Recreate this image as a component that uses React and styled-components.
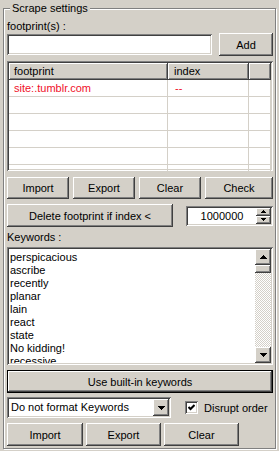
import React from "react";
import styled, { createGlobalStyle } from "styled-components";

const GlobalStyle = createGlobalStyle`
  html, body {
    margin: 0;
    background: #d4d0c8;
  }
  body {
    font-family: "Liberation Sans", Arial, sans-serif;
    font-size: 11px;
    color: #000;
  }
  * {
    box-sizing: border-box;
  }
`;

const raised = `
  box-shadow: inset -1px -1px #404040, inset 1px 1px #ffffff,
    inset -2px -2px #808080, inset 2px 2px #d4d0c8;
`;

const sunken = `
  box-shadow: inset 1px 1px #808080, inset -1px -1px #ffffff,
    inset 2px 2px #404040, inset -2px -2px #d4d0c8;
`;

const Window = styled.div`
  width: 279px;
  height: 451px;
  padding: 2px 3px 0 3px;
  overflow: hidden;
`;

const Group = styled.fieldset`
  margin: 0;
  padding: 5px 2px 2px 3px;
  min-width: 0;
  border: 1px solid #808080;
  box-shadow: inset 1px 1px #ffffff, 1px 1px #ffffff;
`;

const Legend = styled.legend`
  margin-left: 3px;
  padding: 0 2px;
  line-height: 13px;
  background: #d4d0c8;
`;

const Column = styled.div`
  display: flex;
  flex-direction: column;
`;

const Label = styled.div`
  height: 13px;
  line-height: 13px;
  margin-top: ${(p) => p.$mt || 0}px;
`;

const Row = styled.div`
  display: flex;
  align-items: center;
  gap: ${(p) => p.$gap || 0}px;
  margin-top: ${(p) => p.$mt || 0}px;
`;

const Button = styled.button`
  font: inherit;
  color: #000;
  background: #d4d0c8;
  border: 0;
  padding: 0;
  width: ${(p) => (p.$w ? `${p.$w}px` : "auto")};
  flex: ${(p) => (p.$w ? "none" : "1")};
  height: ${(p) => p.$h || 23}px;
  ${raised}
`;

const DefaultButton = styled(Button)`
  border: 1px solid #000;
  box-shadow: inset -1px -1px #404040, inset 1px 1px #ffffff,
    inset -2px -2px #808080;
`;

const TextInput = styled.div`
  width: 205px;
  height: 21px;
  background: #fff;
  ${sunken}
`;

const ListView = styled.div`
  margin-top: 5px;
  height: 110px;
  padding: 2px;
  background: #fff;
  overflow: hidden;
  ${sunken}
`;

const GridRow = styled.div`
  display: grid;
  grid-template-columns: 159px 81px 1fr;
  height: 17px;
`;

const HeadCell = styled.div`
  background: #d4d0c8;
  line-height: 16px;
  padding-left: ${(p) => p.$pl || 5}px;
  box-shadow: inset -1px -1px #404040, inset 1px 1px #ffffff,
    inset -2px -2px #808080;
`;

const Cell = styled.div`
  border-right: 1px solid #d4d0c8;
  border-bottom: 1px solid #d4d0c8;
  line-height: 16px;
  padding-left: ${(p) => p.$pl || 5}px;
  color: #f0102a;
`;

const SpinBox = styled.div`
  margin-left: auto;
  width: 87px;
  height: 20px;
  padding: 2px;
  display: flex;
  background: #fff;
  ${sunken}
`;

const SpinValue = styled.div`
  flex: 1;
  text-align: center;
  line-height: 16px;
`;

const SpinButtons = styled.div`
  width: 15px;
  display: flex;
  flex-direction: column;
`;

const SmallBtn = styled.div`
  flex: 1;
  display: flex;
  align-items: center;
  justify-content: center;
  background: #d4d0c8;
  ${raised}
`;

const TextArea = styled.div`
  margin-top: 3px;
  height: 118px;
  padding: 2px;
  display: flex;
  background: #fff;
  overflow: hidden;
  ${sunken}
`;

const Lines = styled.div`
  flex: 1;
  padding: 2px 0 0 1px;
  line-height: 13px;
  overflow: hidden;
`;

const ScrollBar = styled.div`
  width: 16px;
  display: flex;
  flex-direction: column;
`;

const ScrollBtn = styled.div`
  height: ${(p) => p.$h || 16}px;
  display: flex;
  align-items: center;
  justify-content: center;
  background: #d4d0c8;
  ${raised}
`;

const Track = styled.div`
  flex: 1;
  background: repeating-conic-gradient(#ffffff 0 25%, #d4d0c8 0 50%) 0 0 / 2px 2px;
`;

const SelectBox = styled.div`
  width: 164px;
  height: 21px;
  padding: 2px;
  display: flex;
  background: #fff;
  ${sunken}
`;

const SelectText = styled.div`
  flex: 1;
  padding-left: 2px;
  line-height: 17px;
`;

const DropBtn = styled(ScrollBtn)`
  width: 16px;
  height: 17px;
`;

const CheckLabel = styled.label`
  display: flex;
  align-items: center;
  gap: 6px;
  margin-left: 14px;
`;

const CheckBox = styled.div`
  width: 13px;
  height: 13px;
  display: flex;
  align-items: center;
  justify-content: center;
  background: #fff;
  ${sunken}
`;

const Arrow = ({ dir, w = 7, h = 4 }) => (
  <svg width={w} height={h} viewBox={`0 0 ${w} ${h}`} shapeRendering="crispEdges">
    <path
      d={dir === "up" ? `M${w / 2} 0L${w} ${h}H0z` : `M0 0H${w}L${w / 2} ${h}z`}
      fill="#000"
    />
  </svg>
);

const keywords = [
  "perspicacious",
  "ascribe",
  "recently",
  "planar",
  "lain",
  "react",
  "state",
  "No kidding!",
  "recessive",
];

const rows = [
  ["site:.tumblr.com", "--"],
  ["", ""],
  ["", ""],
  ["", ""],
  ["", ""],
  ["", ""],
];

export default function App() {
  return (
    <Window>
      <GlobalStyle />
      <Group>
        <Legend>Scrape settings</Legend>
        <Column>
          <Label>footprint(s) :</Label>
          <Row $gap={7}>
            <TextInput />
            <Button $h={23}>Add</Button>
          </Row>
          <ListView>
            <GridRow>
              <HeadCell>footprint</HeadCell>
              <HeadCell $pl={6}>index</HeadCell>
              <HeadCell />
            </GridRow>
            {rows.map(([fp, idx], i) => (
              <GridRow key={i}>
                <Cell>{fp}</Cell>
                <Cell $pl={7}>{idx}</Cell>
                <Cell />
              </GridRow>
            ))}
          </ListView>
          <Row $gap={4} $mt={6}>
            <Button $w={62} $h={22}>Import</Button>
            <Button $w={62} $h={22}>Export</Button>
            <Button $w={62} $h={22}>Clear</Button>
            <Button $h={22}>Check</Button>
          </Row>
          <Row $mt={5}>
            <Button $w={166} $h={23}>Delete footprint if index &lt;</Button>
            <SpinBox>
              <SpinValue>1000000</SpinValue>
              <SpinButtons>
                <SmallBtn>
                  <Arrow dir="up" w={5} h={3} />
                </SmallBtn>
                <SmallBtn>
                  <Arrow dir="down" w={5} h={3} />
                </SmallBtn>
              </SpinButtons>
            </SpinBox>
          </Row>
          <Label $mt={4}>Keywords :</Label>
          <TextArea>
            <Lines>
              {keywords.map((k) => (
                <div key={k}>{k}</div>
              ))}
            </Lines>
            <ScrollBar>
              <ScrollBtn>
                <Arrow dir="up" />
              </ScrollBtn>
              <ScrollBtn $h={8} />
              <Track />
              <ScrollBtn>
                <Arrow dir="down" />
              </ScrollBtn>
            </ScrollBar>
          </TextArea>
          <Row $mt={5}>
            <DefaultButton $h={23}>Use built-in keywords</DefaultButton>
          </Row>
          <Row $mt={4}>
            <SelectBox>
              <SelectText>Do not format Keywords</SelectText>
              <DropBtn>
                <Arrow dir="down" />
              </DropBtn>
            </SelectBox>
            <CheckLabel>
              <CheckBox>
                <svg width="7" height="7" viewBox="0 0 7 7">
                  <path d="M0.5 3 L2.5 5 L6.5 1" fill="none" stroke="#000" strokeWidth="2" />
                </svg>
              </CheckBox>
              Disrupt order
            </CheckLabel>
          </Row>
          <Row $gap={3} $mt={5}>
            <Button $w={76} $h={23}>Import</Button>
            <Button $w={75} $h={23}>Export</Button>
            <Button $w={75} $h={23}>Clear</Button>
          </Row>
        </Column>
      </Group>
    </Window>
  );
}
